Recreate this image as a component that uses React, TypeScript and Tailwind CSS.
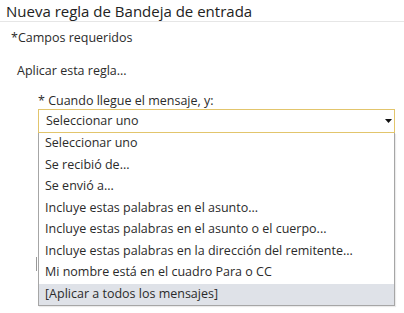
import React from 'react';

const options = [
  'Seleccionar uno',
  'Se recibió de...',
  'Se envió a...',
  'Incluye estas palabras en el asunto...',
  'Incluye estas palabras en el asunto o el cuerpo...',
  'Incluye estas palabras en la dirección del remitente...',
  'Mi nombre está en el cuadro Para o CC',
  '[Aplicar a todos los mensajes]',
];

const App: React.FC = () => {
  return (
    <div className="relative w-[404px] h-[313px] bg-white text-[#2b2b2b] font-['Open_Sans',sans-serif] overflow-hidden">
      {/* header */}
      <div className="h-[22px] border-b border-[#e6e6e6] pl-[6px] flex items-center">
        <h1 className="text-[15px] leading-[20px] text-[#222]">Nueva regla de Bandeja de entrada</h1>
      </div>

      <div className="pl-[11px] pt-[8px] h-[33px] text-[12.5px] leading-[16px]">*Campos requeridos</div>
      <div className="pl-[17px] h-[30px] text-[12.5px] leading-[16px] pt-[8px]">Aplicar esta regla...</div>

      <div className="pl-[38px] pr-[9px]">
        <div className="h-[16px] text-[12.5px] leading-[16px] mt-[8px]">* Cuando llegue el mensaje, y:</div>

        {/* select */}
        <div className="h-[24px] border border-[#e2c56c] flex items-center justify-between pl-[7px] pr-[2px] text-[12.5px]">
          <span>Seleccionar uno</span>
          <svg width="7" height="4" viewBox="0 0 7 4">
            <path d="M0 0 H7 L3.5 4 Z" fill="#111" />
          </svg>
        </div>

        {/* open list */}
        <div className="border-x border-b border-[#a6a6a6] shadow-[1px_1px_1px_rgba(0,0,0,0.08)]">
          {options.map((o, i) => (
            <div
              key={o}
              className={`h-[21.5px] flex items-center pl-[6px] text-[12.5px] ${i === options.length - 1 ? 'bg-[#dfe2e8]' : ''}`}
            >
              {o}
            </div>
          ))}
        </div>
      </div>

      {/* element behind the dropdown peeking out */}
      <div className="absolute left-[36px] top-[257px] w-px h-[14px] bg-[#999]" />
    </div>
  );
};

export default App;
